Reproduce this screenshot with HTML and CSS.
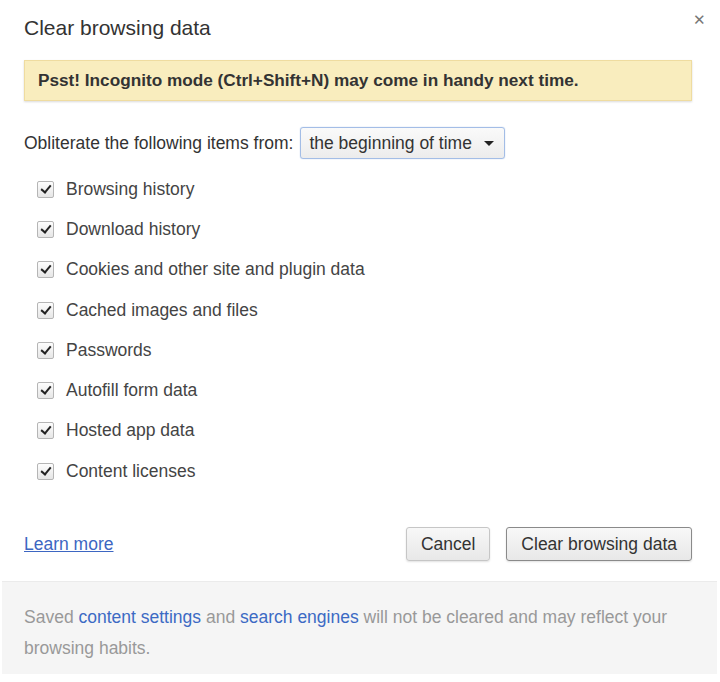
FILE: index.html
```html
<!DOCTYPE html>
<html lang="en">
<head>
    <meta charset="UTF-8">
    <title>Clear browsing data</title>
    <link rel="stylesheet" href="styles.css">
</head>
<body>
    <div class="dialog">
        <div class="dialog-body">
            <div class="close">&#x2715;</div>
            <h1>Clear browsing data</h1>
            <div class="banner">Psst! Incognito mode (Ctrl+Shift+N) may come in handy next time.</div>

            <div class="period">
                <span>Obliterate the following items from:</span>
                <div class="select">
                    <span>the beginning of time</span>
                    <span class="caret"></span>
                </div>
            </div>

            <ul class="items">
                <li><span class="check"></span>Browsing history</li>
                <li><span class="check"></span>Download history</li>
                <li><span class="check"></span>Cookies and other site and plugin data</li>
                <li><span class="check"></span>Cached images and files</li>
                <li><span class="check"></span>Passwords</li>
                <li><span class="check"></span>Autofill form data</li>
                <li><span class="check"></span>Hosted app data</li>
                <li><span class="check"></span>Content licenses</li>
            </ul>

            <div class="actions">
                <a href="#" class="learn">Learn more</a>
                <div class="buttons">
                    <button class="btn">Cancel</button>
                    <button class="btn btn-default">Clear browsing data</button>
                </div>
            </div>
        </div>
        <div class="footer">
            <p>Saved <a href="#">content settings</a> and <a href="#">search engines</a> will not be cleared and may reflect your browsing habits.</p>
        </div>
    </div>
</body>
</html>
```

FILE: styles.css
```css
body, html {
    margin: 0;
    padding: 0;
    background-color: white;
    font-family: "Liberation Sans", Arial, sans-serif;
    color: #333;
}

.dialog {
    width: 720px;
    height: 682px;
    box-sizing: border-box;
    padding: 0 3px 8px 2px;
}

.dialog-body {
    position: relative;
    padding: 14px 25px 0 22px;
}

.close {
    position: absolute;
    top: 11px;
    right: 11px;
    font-size: 15px;
    color: #777;
}

h1 {
    margin: 0;
    font-size: 21px;
    font-weight: normal;
    color: #333;
    line-height: 28px;
}

.banner {
    margin-top: 18px;
    height: 39px;
    line-height: 39px;
    padding-left: 13px;
    background-color: #f9edbe;
    border: 1px solid #efdca0;
    box-shadow: 0 1px 2px rgba(0, 0, 0, 0.15);
    font-size: 17.2px;
    font-weight: bold;
    color: #333;
}

.period {
    display: flex;
    align-items: center;
    gap: 7px;
    margin-top: 26px;
    font-size: 17.5px;
}

.select {
    display: flex;
    align-items: center;
    height: 30px;
    padding: 0 10px 0 8px;
    border: 1px solid #a3bde6;
    border-radius: 3px;
    background: linear-gradient(#fafafa, #ececec);
    box-shadow: 0 0 1px #8fb0e0;
    color: #333;
}

.caret {
    margin-left: 12px;
    width: 0;
    height: 0;
    border-left: 5px solid transparent;
    border-right: 5px solid transparent;
    border-top: 5px solid #222;
}

.items {
    list-style: none;
    margin: 10px 0 0 0;
    padding: 0 0 0 13px;
}

.items li {
    display: flex;
    align-items: center;
    height: 40.3px;
    font-size: 17.5px;
    color: #444;
}

.check {
    position: relative;
    width: 15px;
    height: 15px;
    margin-right: 12px;
    border: 1px solid #b5b5b5;
    border-radius: 2px;
    background: linear-gradient(#fdfdfd, #e6e6e6);
}

.check::after {
    content: "";
    position: absolute;
    left: 5px;
    top: 1px;
    width: 4px;
    height: 8px;
    border: solid #222;
    border-width: 0 2.5px 2.5px 0;
    transform: rotate(40deg);
}

.actions {
    display: flex;
    align-items: center;
    justify-content: space-between;
    margin-top: 36px;
}

.learn {
    font-size: 17.5px;
    color: #3d66c2;
}

.buttons {
    display: flex;
    gap: 16px;
}

.btn {
    height: 34px;
    padding: 0 14px;
    font-family: "Liberation Sans", Arial, sans-serif;
    font-size: 17.5px;
    color: #333;
    border: 1px solid #c6c6c6;
    border-radius: 3px;
    background: linear-gradient(#f8f8f8, #e8e8e8);
    box-shadow: 0 1px 2px rgba(0, 0, 0, 0.12);
}

.btn-default {
    border-color: #8a8a8a;
}

.footer {
    margin-top: 20px;
    height: 93px;
    box-sizing: border-box;
    padding: 20px 20px 0 22px;
    background-color: #f5f5f5;
    border-top: 1px solid #ebebeb;
    font-size: 17.5px;
    line-height: 31px;
    color: #999;
}

.footer p {
    margin: 0;
}

.footer a {
    color: #3c6ac4;
    text-decoration: none;
}
```
